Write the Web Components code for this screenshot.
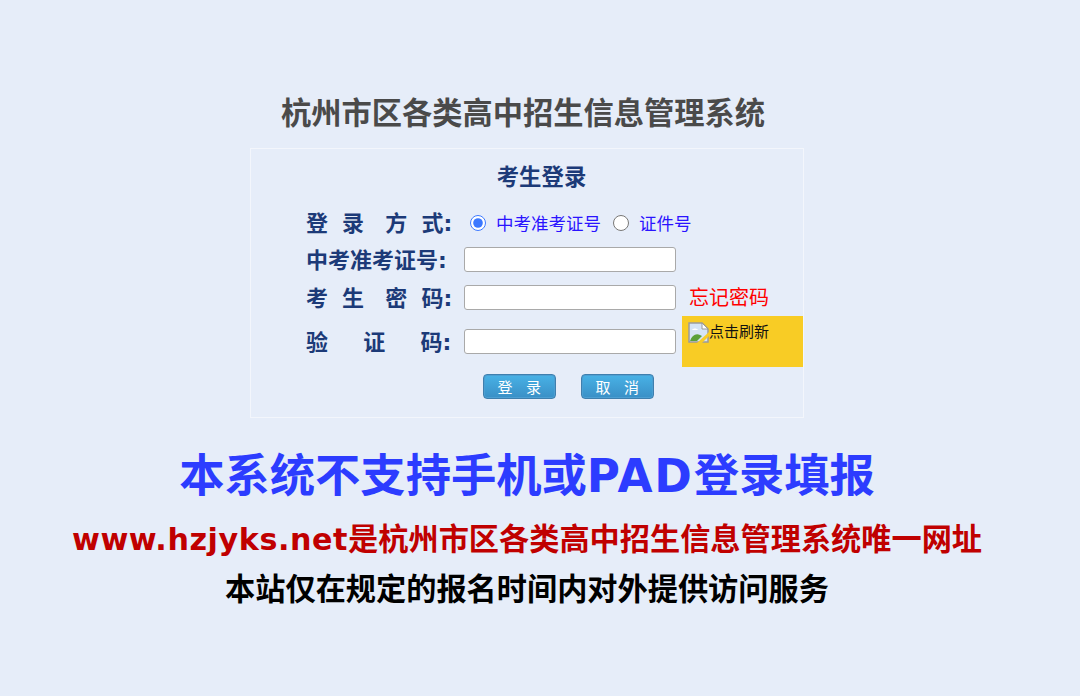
<!DOCTYPE html>
<html lang="zh">
<head>
<meta charset="utf-8">
<title>杭州市区各类高中招生信息管理系统</title>
<style>
    html, body { margin: 0; height: 100%; background: #e6edf9; }
    body { font-family: "Liberation Sans", "Noto Sans CJK SC", sans-serif; }
</style>
</head>
<body>
<login-page></login-page>

<script>
class LoginButton extends HTMLElement {
    constructor() {
        super();
        this.attachShadow({ mode: 'open' });
        this.shadowRoot.innerHTML = `
            <style>
                :host { display: block; }
                button {
                    display: block;
                    box-sizing: border-box;
                    width: 72.5px;
                    height: 25px;
                    padding: 0;
                    border: 1px solid #3f7fae;
                    border-radius: 4px;
                    background: linear-gradient(#48b2e6, #3a8fc6);
                    color: #fff;
                    font: 15px "Noto Sans CJK SC", sans-serif;
                    white-space: pre;
                    box-shadow: inset 0 0 0 1px #4c9fd2;
                }
            </style>
            <button type="button"><slot></slot></button>
        `;
    }
}

class LoginRow extends HTMLElement {
    constructor() {
        super();
        this.attachShadow({ mode: 'open' });
        this.shadowRoot.innerHTML = `
            <style>
                :host { display: flex; align-items: center; }
                .label {
                    width: 212.5px;
                    flex: none;
                    box-sizing: border-box;
                    padding: 0 0 2px 55px;
                    color: #1c3a78;
                    font: bold 22px "DejaVu Sans", "Noto Sans CJK SC", sans-serif;
                    word-spacing: -.6px;
                    white-space: pre;
                }
                .field { flex: 1; display: flex; align-items: center; min-width: 0; }
            </style>
            <div class="label"><slot name="label"></slot></div>
            <div class="field"><slot></slot></div>
        `;
    }
}

class LoginPage extends HTMLElement {
    constructor() {
        super();
        this.attachShadow({ mode: 'open' });
        this.shadowRoot.innerHTML = `
            <style>
                :host {
                    display: block;
                    width: 1054px;
                    padding-top: 94px;
                    text-align: center;
                    font-family: "Liberation Sans", "Noto Sans CJK SC", sans-serif;
                }
                .wrap { width: 554px; margin-left: 250px; }
                h1 {
                    margin: 0 0 15px -8px;
                    height: 39px;
                    line-height: 39px;
                    font-size: 30.25px;
                    color: #4a4a4a;
                }
                .card {
                    box-sizing: border-box;
                    height: 270px;
                    border: 1px solid #f3f6fc;
                    padding-top: 14px;
                }
                h2 {
                    margin: 0 0 14px 29px;
                    height: 30px;
                    line-height: 30px;
                    font-size: 22.4px;
                    color: #1c3a78;
                }
                .form { text-align: left; }
                .r1 { height: 30px; margin-bottom: 7px; }
                .r2 { height: 30px; margin-bottom: 8px; }
                .r3 { height: 30px; }
                .r4 { height: 50px; margin-top: 4px; }
                input[type=text] {
                    box-sizing: border-box;
                    width: 212px;
                    height: 25px;
                    margin: 0;
                    padding: 0;
                    background: #fff;
                    border: 1px solid #a9a9a9;
                    border-radius: 3px;
                }
                input[type=radio] {
                    width: 16px;
                    height: 16px;
                    margin: 2px 0 0;
                    accent-color: #3b78ff;
                }
                input.first { margin-left: 6.5px; }
                .opt { color: #2a13ff; font-size: 17.5px; margin: 0 12px 0 10px; }
                .forgot { color: #ff0000; font-size: 20px; margin: 0 0 2px 13.5px; }
                .code {
                    width: 121px;
                    height: 51px;
                    flex: none;
                    margin-left: 6.5px;
                    background: #f8cc25;
                    color: #111;
                    font-size: 15px;
                    line-height: 18px;
                    display: flex;
                    align-items: flex-start;
                    padding: 6px 0 0 6px;
                    box-sizing: border-box;
                }
                .code svg { flex: none; width: 21px; height: 21px; }
                .code span { margin-top: 1px; }
                .buttons { display: flex; gap: 25.5px; padding: 8px 0 0 232px; }
                .big {
                    margin: 30px 0 0;
                    height: 57px;
                    line-height: 57px;
                    font-size: 45.3px;
                    font-weight: bold;
                    color: #2c3cff;
                }
                .big span {
                    font-family: "DejaVu Sans", sans-serif;
                    letter-spacing: 1.7px;
                }
                .url {
                    margin: 15px 0 0;
                    height: 40px;
                    line-height: 40px;
                    font-size: 30.2px;
                    font-weight: bold;
                    color: #c00000;
                }
                .url span {
                    font-family: "DejaVu Sans", sans-serif;
                    letter-spacing: .57px;
                }
                .note {
                    margin: 10px 0 0;
                    height: 40px;
                    line-height: 40px;
                    font-size: 30.2px;
                    font-weight: bold;
                    color: #000;
                }
            </style>
            <div class="wrap">
                <h1>杭州市区各类高中招生信息管理系统</h1>
                <div class="card">
                    <h2>考生登录</h2>
                    <div class="form">
                        <login-row class="r1">
                            <span slot="label">登  录   方  式:</span>
                            <input class="first" type="radio" name="way" checked>
                            <span class="opt">中考准考证号</span>
                            <input type="radio" name="way">
                            <span class="opt">证件号</span>
                        </login-row>
                        <login-row class="r2">
                            <span slot="label">中考准考证号:</span>
                            <input type="text">
                        </login-row>
                        <login-row class="r3">
                            <span slot="label">考  生   密  码:</span>
                            <input type="text">
                            <span class="forgot">忘记密码</span>
                        </login-row>
                        <login-row class="r4">
                            <span slot="label">验     证     码:</span>
                            <input type="text">
                            <span class="code">
                                <svg viewBox="0 0 21 21" aria-hidden="true">
                                    <path d="M1 1h13l6 6v13H1z" fill="#d5e4f6" stroke="#9a9a9a" stroke-width="1.5"/>
                                    <path d="M14 1v6h6z" fill="#fff" stroke="#9a9a9a"/>
                                    <path d="M4 8c1-2 5-2 6 0z" fill="#fff"/>
                                    <path d="M2 19c2-6 6-8 10-6l2 1-5 5z" fill="#5aa13a"/>
                                    <path d="M9 21 21 10v4l-7 7z" fill="#f8cc25"/>
                                </svg>
                                <span>点击刷新</span>
                            </span>
                        </login-row>
                    </div>
                    <div class="buttons">
                        <login-button>登    录</login-button>
                        <login-button>取    消</login-button>
                    </div>
                </div>
            </div>
            <div class="big">本系统不支持手机或<span>PAD</span>登录填报</div>
            <div class="url"><span>www.hzjyks.net</span>是杭州市区各类高中招生信息管理系统唯一网址</div>
            <div class="note">本站仅在规定的报名时间内对外提供访问服务</div>
        `;
    }
}

customElements.define('login-button', LoginButton);
customElements.define('login-row', LoginRow);
customElements.define('login-page', LoginPage);
</script>
</body>
</html>
